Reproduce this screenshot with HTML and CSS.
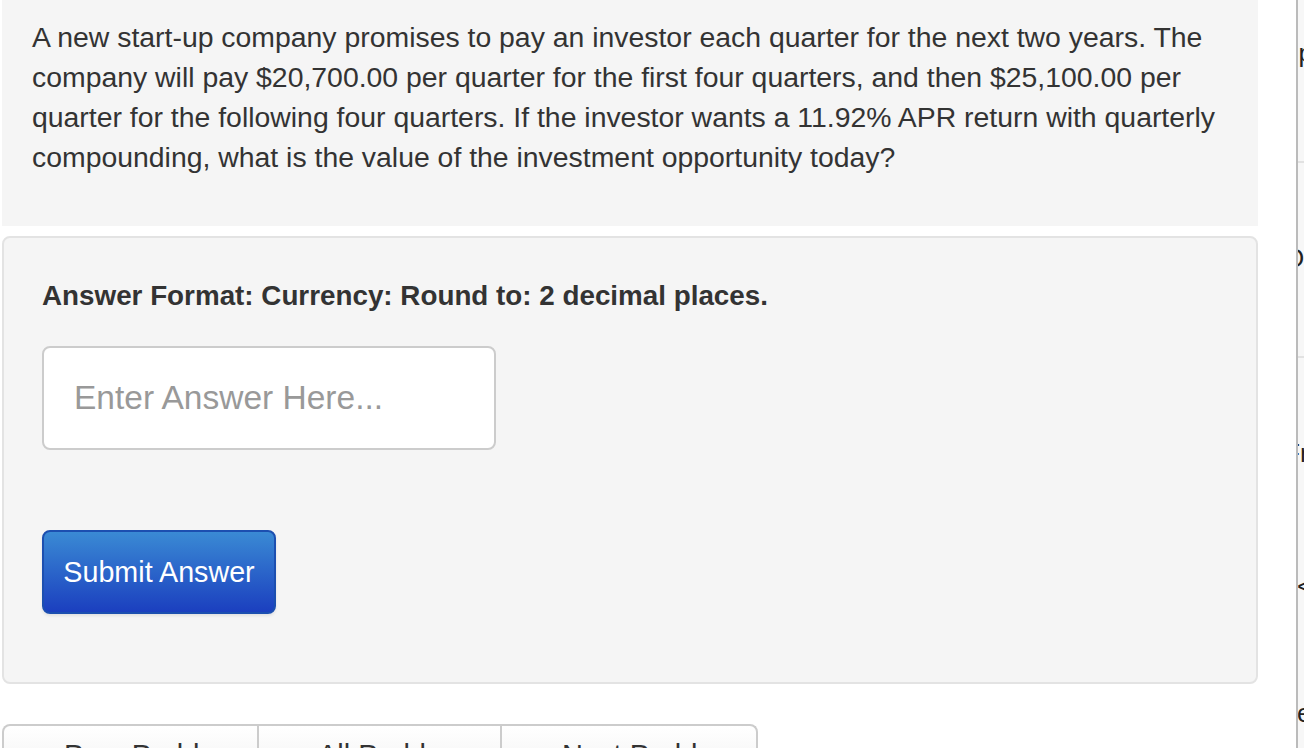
FILE: index.html
```html
<!DOCTYPE html>
<html>
<head>
<meta charset="utf-8">
<link rel="stylesheet" href="styles.css">
</head>
<body>
<div class="page">
  <main class="main">
    <section class="question">
      <p>A new start-up company promises to pay an investor each quarter for the next two years. The company will pay $20,700.00 per quarter for the first four quarters, and then $25,100.00 per quarter for the following four quarters. If the investor wants a 11.92% APR return with quarterly compounding, what is the value of the investment opportunity today?</p>
    </section>
    <section class="answer">
      <h3 class="format">Answer Format: Currency: Round to: 2 decimal places.</h3>
      <input class="answer-input" type="text" placeholder="Enter Answer Here...">
      <button class="submit">Submit Answer</button>
    </section>
    <nav class="pager">
      <a class="pager-item prev"><span class="arrow">◀</span>Prev Problem</a>
      <a class="pager-item all"><span class="arrow">▲</span>All Problems</a>
      <a class="pager-item next"><span class="arrow">▶</span>Next Problem</a>
    </nav>
  </main>
  <aside class="side">
    <div class="side-block b1"><span>op</span></div>
    <div class="side-block b2"><span>Ou</span></div>
    <div class="side-block b3"><span class="s3">Fr:</span><span class="s4">&lt;</span><span class="s5">ce</span></div>
  </aside>
</div>
</body>
</html>
```
FILE: styles.css
```css
html, body {
  margin: 0;
  padding: 0;
  height: 748px;
  overflow: hidden;
  background: #ffffff;
}
body {
  font-family: "Liberation Sans", Arial, Helvetica, sans-serif;
  color: #333333;
}
.page {
  display: flex;
  align-items: flex-start;
}
.main {
  width: 1256px;
  margin-left: 2px;
  flex: none;
}
.question {
  background: #f5f5f5;
  padding: 17px 30px 49px 30px;
}
.question p {
  margin: 0;
  font-size: 28.4px;
  line-height: 40px;
}
.answer {
  margin-top: 10px;
  background: #f5f5f5;
  border: 2px solid #e3e3e3;
  border-radius: 8px;
  padding: 38px 38px 68px 38px;
}
.format {
  margin: 0;
  font-size: 27.8px;
  line-height: 40px;
  font-weight: bold;
  color: #333333;
}
.answer-input {
  display: block;
  box-sizing: border-box;
  margin-top: 30px;
  width: 454px;
  height: 104px;
  border: 2px solid #cccccc;
  border-radius: 8px;
  background: #ffffff;
  padding: 0 30px;
  font-family: "Liberation Sans", Arial, sans-serif;
  font-size: 33.5px;
  color: #555555;
  outline: none;
}
.answer-input::placeholder {
  color: #999999;
}
.submit {
  display: block;
  box-sizing: border-box;
  margin-top: 80px;
  width: 234px;
  height: 84px;
  border: 2px solid #1c4fb0;
  border-radius: 8px;
  background: linear-gradient(to bottom, #3a8ad4 0%, #1b3fbf 100%);
  color: #ffffff;
  font-family: "Liberation Sans", Arial, sans-serif;
  font-size: 28.7px;
  padding: 0;
  box-shadow: 0 2px 3px rgba(0,0,0,0.08);
}
.pager {
  margin-top: 40px;
  display: flex;
  width: 756px;
  height: 60px;
  box-sizing: border-box;
  border: 2px solid #cccccc;
  border-bottom: none;
  border-radius: 8px 8px 0 0;
  background: linear-gradient(to bottom, #ffffff 0%, #f0f0f0 100%);
  overflow: hidden;
}
.pager-item {
  box-sizing: border-box;
  display: block;
  padding-top: 12px;
  font-size: 29px;
  line-height: 34px;
  color: #333333;
  white-space: nowrap;
}
.pager-item .arrow {
  display: inline-block;
  font-size: 20px;
  vertical-align: 2px;
}
.prev { width: 255px; border-right: 2px solid #cccccc; padding-left: 31px; }
.prev .arrow { width: 29px; }
.all { width: 243px; border-right: 2px solid #cccccc; padding-left: 29px; }
.all .arrow { width: 30px; }
.next { flex: 1; padding-left: 38px; }
.next .arrow { width: 22px; }
.side {
  margin-left: 38px;
  width: 300px;
  height: 748px;
  flex: none;
  border-left: 2px solid #bbbbbb;
  background: #f7f7f7;
  font-size: 26px;
  color: #222222;
  overflow: hidden;
}
.side-block {
  box-sizing: border-box;
  border-bottom: 2px solid #e2e2e2;
  margin-left: -14px;
}
.b1 { height: 163px; padding-top: 38px; }
.b2 { height: 195px; padding-top: 80px; }
.b3 { height: 400px; border-bottom: none; padding-top: 80px; }
.side-block span { display: block; line-height: 30px; }
.s4 { margin-top: 103px; margin-left: 13px; }
.s5 { margin-top: 97px; }
```
